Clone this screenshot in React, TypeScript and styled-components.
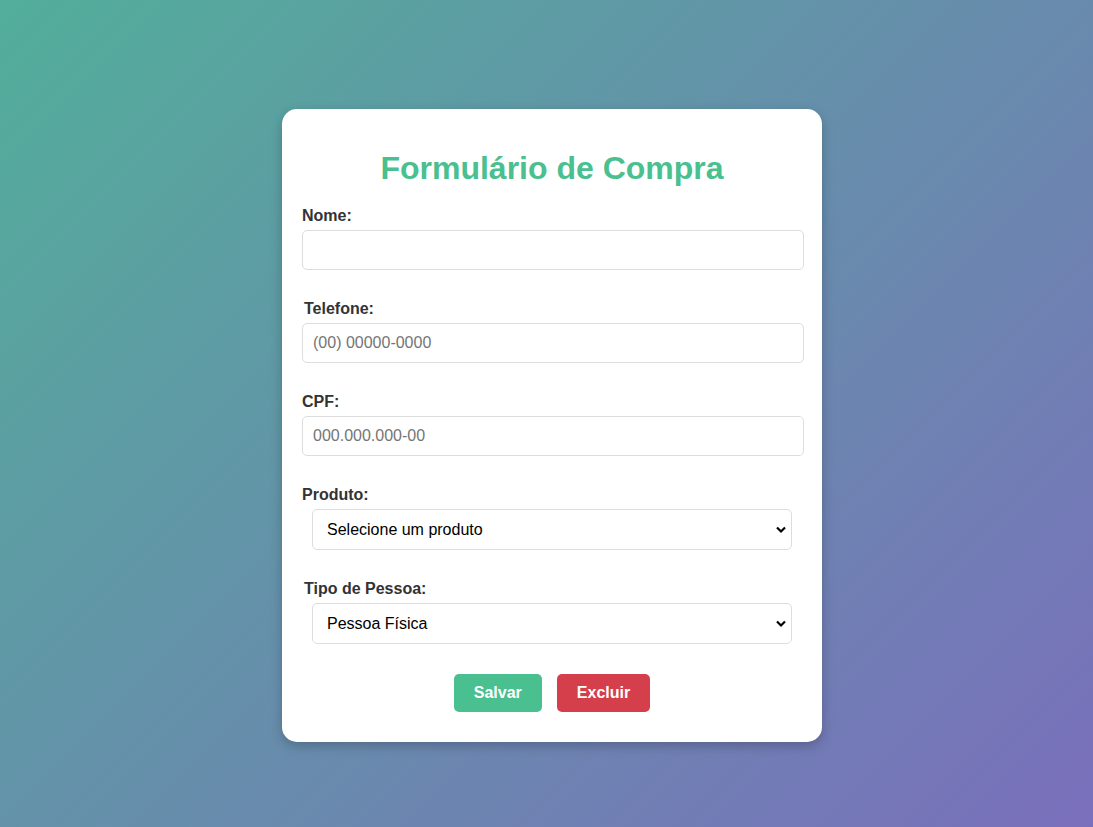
import React from "react";
import styled, { createGlobalStyle } from "styled-components";

const GlobalStyle = createGlobalStyle`
  html, body { margin: 0; padding: 0; }
  body {
    font-family: "Liberation Sans", Arial, sans-serif;
    min-height: 827px;
    background: linear-gradient(135deg, #52ae9a 0%, #7a6fbc 100%);
    background-attachment: fixed;
  }
  * { box-sizing: border-box; }
`;

const Page = styled.div`
  display: flex;
  justify-content: center;
  align-items: flex-start;
  padding: 109px 0 0 11px;
  min-height: 827px;
`;

const Card = styled.form`
  width: 540px;
  background: #ffffff;
  border-radius: 15px;
  padding: 20px 20px 30px 20px;
  box-shadow: 0 4px 12px rgba(0, 0, 0, 0.22);
  display: flex;
  flex-direction: column;
`;

const Title = styled.h2`
  margin: 21px 0 19px;
  font-size: 32px;
  line-height: 37px;
  font-weight: bold;
  text-align: center;
  color: #4abf8f;
`;

const Group = styled.div`
  display: flex;
  flex-direction: column;
  margin-bottom: 29px;
`;

const Label = styled.label<{ $indent?: number }>`
  display: block;
  font-size: 16px;
  line-height: 18px;
  font-weight: bold;
  color: #333333;
  margin: 1px 0 5px ${(p) => p.$indent ?? 0}px;
`;

const Input = styled.input`
  width: 502px;
  height: 40px;
  padding: 10px;
  border: 1px solid #dddddd;
  border-radius: 5px;
  font-family: "Liberation Sans", Arial, sans-serif;
  font-size: 16px;
  color: #333;
  background: #fff;
  outline: none;
  &::placeholder { color: #757575; }
`;

const SelectWrap = styled.div`
  position: relative;
  width: 480px;
  margin-left: 10px;
`;

const Select = styled.select`
  width: 480px;
  height: 41px;
  padding: 0 30px 0 14px;
  border: 1px solid #dddddd;
  border-radius: 5px;
  font-family: "Liberation Sans", Arial, sans-serif;
  font-size: 16px;
  color: #000;
  background: #fff;
  appearance: none;
  -webkit-appearance: none;
  outline: none;
`;

const Chevron = styled.svg`
  position: absolute;
  right: 4px;
  top: 16px;
  pointer-events: none;
`;

const Buttons = styled.div`
  display: flex;
  justify-content: center;
  gap: 15px;
  margin-top: 1px;
`;

const Button = styled.button<{ $color: string }>`
  height: 38px;
  padding: 0 20px;
  border: none;
  border-radius: 5px;
  background: ${(p) => p.$color};
  color: #ffffff;
  font-family: "Liberation Sans", Arial, sans-serif;
  font-size: 16px;
  font-weight: bold;
  cursor: pointer;
`;

const Arrow = () => (
  <Chevron width="14" height="9" viewBox="0 0 14 9">
    <path d="M3 2.5 L7 6.5 L11 2.5" fill="none" stroke="#000" strokeWidth="2.2" />
  </Chevron>
);

export default function App() {
  return (
    <>
      <GlobalStyle />
      <Page>
        <Card onSubmit={(e) => e.preventDefault()}>
          <Title>Formulário de Compra</Title>
          <Group>
            <Label htmlFor="nome">Nome:</Label>
            <Input id="nome" type="text" />
          </Group>
          <Group>
            <Label htmlFor="tel" $indent={2}>Telefone:</Label>
            <Input id="tel" type="text" placeholder="(00) 00000-0000" />
          </Group>
          <Group>
            <Label htmlFor="cpf">CPF:</Label>
            <Input id="cpf" type="text" placeholder="000.000.000-00" />
          </Group>
          <Group>
            <Label htmlFor="produto">Produto:</Label>
            <SelectWrap>
              <Select id="produto" defaultValue="">
                <option value="">Selecione um produto</option>
                <option value="1">Produto 1</option>
                <option value="2">Produto 2</option>
              </Select>
              <Arrow />
            </SelectWrap>
          </Group>
          <Group>
            <Label htmlFor="tipo" $indent={2}>Tipo de Pessoa:</Label>
            <SelectWrap>
              <Select id="tipo" defaultValue="pf">
                <option value="pf">Pessoa Física</option>
                <option value="pj">Pessoa Jurídica</option>
              </Select>
              <Arrow />
            </SelectWrap>
          </Group>
          <Buttons>
            <Button type="submit" $color="#4abf8f">Salvar</Button>
            <Button type="button" $color="#d43f4b">Excluir</Button>
          </Buttons>
        </Card>
      </Page>
    </>
  );
}
